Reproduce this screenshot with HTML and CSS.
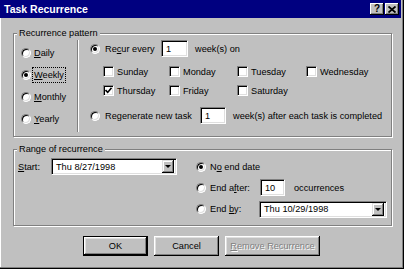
FILE: index.html
```html
<!DOCTYPE html>
<html lang="en">
  <head>
    <meta charset="UTF-8" />
    <meta name="viewport" content="width=device-width, initial-scale=1.0" />
    <title>Task Recurrence</title>
    <link rel="stylesheet" href="styles.css">
  </head>
  <body>
    <div id="dialog">
      <div id="titlebar">
        <span class="title">Task Recurrence</span>
        <span class="cap-btn help">?</span>
        <span class="cap-btn close">
          <svg width="8" height="7" viewBox="0 0 8 7"><path d="M0.5 0.5 L7.5 6.5 M7.5 0.5 L0.5 6.5" stroke="#000" stroke-width="1.8" /></svg>
        </span>
      </div>

      <fieldset class="group" id="pattern">
        <legend>Recurrence pattern</legend>
        <div class="pattern-body">
          <div class="freq">
            <div class="opt"><span class="radio"></span><span><u>D</u>aily</span></div>
            <div class="opt"><span class="radio on"></span><span class="focus"><u>W</u>eekly</span></div>
            <div class="opt"><span class="radio"></span><span><u>M</u>onthly</span></div>
            <div class="opt"><span class="radio"></span><span><u>Y</u>early</span></div>
          </div>
          <div class="sep"></div>
          <div class="weekly">
            <div class="line recur">
              <span class="radio on"></span>
              <span class="lbl lbl-recur">Re<u>c</u>ur every</span>
              <span class="edit num-1">1</span>
              <span class="tail">week(s) on</span>
            </div>
            <div class="days">
              <div class="check"><span class="box"></span>Sunday</div>
              <div class="check"><span class="box"></span>Monday</div>
              <div class="check"><span class="box"></span>Tuesday</div>
              <div class="check"><span class="box"></span>Wednesday</div>
              <div class="check"><span class="box">
                <svg width="7" height="7" viewBox="0 0 7 7"><path d="M0.5 3 L2.7 5.4 L6.5 0.8" fill="none" stroke="#000" stroke-width="1.6" /></svg>
              </span>Thursday</div>
              <div class="check"><span class="box"></span>Friday</div>
              <div class="check"><span class="box"></span>Saturday</div>
            </div>
            <div class="line regen">
              <span class="radio"></span>
              <span class="lbl lbl-regen">Re<u>g</u>enerate new task</span>
              <span class="edit num-2">1</span>
              <span class="tail">week(s) after each task is completed</span>
            </div>
          </div>
        </div>
      </fieldset>

      <fieldset class="group" id="range">
        <legend>Range of recurrence</legend>
        <div class="range-body">
          <div class="start">
            <span class="lbl lbl-start"><u>S</u>tart:</span>
            <span class="combo combo-start">
              <span class="val">Thu 8/27/1998</span>
              <span class="drop"><span class="arrow"></span></span>
            </span>
          </div>
          <div class="ends">
            <div class="end-row"><span class="radio on"></span><span>N<u>o</u> end date</span></div>
            <div class="end-row">
              <span class="radio"></span>
              <span class="lbl lbl-end">End a<u>f</u>ter:</span>
              <span class="edit num-3">10</span>
              <span class="tail occ">occurrences</span>
            </div>
            <div class="end-row">
              <span class="radio"></span>
              <span class="lbl lbl-endby">End <u>b</u>y:</span>
              <span class="combo combo-end">
                <span class="val">Thu 10/29/1998</span>
                <span class="drop"><span class="arrow"></span></span>
              </span>
            </div>
          </div>
        </div>
      </fieldset>

      <div class="buttons">
        <span class="btn default">OK</span>
        <span class="btn">Cancel</span>
        <span class="btn wide disabled"><span><u>R</u>emove Recurrence</span></span>
      </div>
    </div>
  </body>
</html>
```

FILE: styles.css
```css
* {
  box-sizing: border-box;
}
body {
  margin: 0;
  font-family: "Liberation Sans", Arial, sans-serif;
  font-size: 9.2px;
  color: #000;
  background: #c0c0c0;
}
u {
  text-decoration-thickness: 1px;
  text-underline-offset: 1px;
}
#dialog {
  width: 404px;
  height: 269px;
  background: #c0c0c0;
  border-right: 1px solid #000;
  border-bottom: 1px solid #000;
  box-shadow: inset -1px -1px 0 #808080, inset 1px 0 0 #fff;
  overflow: hidden;
}
#titlebar {
  display: flex;
  align-items: center;
  height: 18px;
  margin-right: 2px;
  padding: 0 2px 0 4px;
  background: #000080;
  color: #fff;
}
.title {
  flex: 1;
  font-size: 10.5px;
  font-weight: bold;
}
.cap-btn {
  display: flex;
  align-items: center;
  justify-content: center;
  width: 14px;
  height: 12px;
  background: #c0c0c0;
  color: #000;
  font-weight: bold;
  font-size: 10px;
  box-shadow: inset -1px -1px 0 #000, inset 1px 1px 0 #fff, inset -2px -2px 0 #808080;
}
.help {
  margin-right: 1px;
  padding-bottom: 1px;
}

/* group boxes */
.group {
  margin: 9px 0 0 13px;
  width: 379px;
  min-width: 0;
  padding: 1px 0 0 0;
  border: 1px solid #808080;
  box-shadow: 1px 1px 0 #fff, inset 1px 1px 0 #fff;
}
.group legend {
  margin-left: 3px;
  padding: 0 2px;
  line-height: 12px;
  background: #c0c0c0;
}
#range {
  margin-top: 6px;
}
.pattern-body {
  display: flex;
  height: 96px;
}
.freq {
  width: 63px;
  padding: 2px 0 0 7px;
}
.opt {
  display: flex;
  align-items: center;
  height: 22px;
}
.opt .radio {
  margin-right: 3px;
}
.focus {
  padding: 1px 1px;
  margin-left: -1px;
  outline: 1px dotted #000;
  line-height: 12px;
}
.sep {
  width: 2px;
  margin-bottom: 4px;
  border-left: 1px solid #808080;
  border-right: 1px solid #fff;
}
.weekly {
  padding-left: 11px;
}
.line {
  display: flex;
  align-items: center;
  height: 17px;
}
.line .radio {
  margin-right: 5px;
}
.regen {
  margin-top: 7px;
}
.lbl-recur {
  width: 56px;
}
.lbl-regen {
  width: 95px;
}
.tail {
  margin-left: 7px;
}
.days {
  display: grid;
  grid-template-columns: 66px 68px 69px auto;
  grid-auto-rows: 19px;
  margin-top: 5px;
  padding-left: 13px;
}
.check {
  display: flex;
  align-items: center;
}

/* controls */
.radio {
  position: relative;
  flex: none;
  width: 10px;
  height: 10px;
  border-radius: 50%;
  background: #fff;
  border: 1px solid;
  border-color: #808080 #fff #fff #808080;
  box-shadow: inset 1px 1px 0 #000, inset -1px -1px 0 #dfdfdf;
}
.radio.on::after {
  content: "";
  position: absolute;
  left: 2px;
  top: 2px;
  width: 4px;
  height: 4px;
  border-radius: 50%;
  background: #000;
}
.box {
  display: flex;
  align-items: center;
  justify-content: center;
  flex: none;
  width: 11px;
  height: 11px;
  margin-right: 3px;
  background: #fff;
  border: 1px solid;
  border-color: #808080 #fff #fff #808080;
  box-shadow: inset 1px 1px 0 #000, inset -1px -1px 0 #dfdfdf;
}
.edit,
.combo {
  display: flex;
  align-items: center;
  height: 17px;
  padding-left: 4px;
  background: #fff;
  border: 1px solid;
  border-color: #808080 #fff #fff #808080;
  box-shadow: inset 1px 1px 0 #000, inset -1px -1px 0 #dfdfdf;
}
.num-1 {
  width: 27px;
}
.num-2 {
  width: 26px;
}
.num-3 {
  width: 25px;
}
.combo {
  padding-right: 2px;
}
.combo .val {
  flex: 1;
}
.drop {
  display: flex;
  align-items: center;
  justify-content: center;
  width: 12px;
  height: 13px;
  background: #c0c0c0;
  box-shadow: inset -1px -1px 0 #000, inset 1px 1px 0 #dfdfdf, inset -2px -2px 0 #808080, inset 2px 2px 0 #fff;
}
.arrow {
  border-left: 3px solid transparent;
  border-right: 3px solid transparent;
  border-top: 3px solid #000;
}

/* range of recurrence */
.range-body {
  display: flex;
  height: 69px;
}
.start {
  display: flex;
  align-items: center;
  height: 21px;
  padding-left: 4px;
}
.lbl-start {
  width: 33px;
}
.combo-start {
  width: 126px;
}
.ends {
  margin-left: 19px;
}
.end-row {
  display: flex;
  align-items: center;
  height: 21px;
}
.end-row:last-child {
  height: 22px;
}
.end-row .radio {
  margin-right: 4px;
}
.lbl-end {
  width: 50px;
}
.lbl-endby {
  width: 49px;
}
.occ {
  margin-left: 9px;
}
.combo-end {
  width: 128px;
}

/* buttons */
.buttons {
  display: flex;
  gap: 6px;
  margin-top: 10px;
  padding-left: 83px;
}
.btn {
  display: flex;
  align-items: center;
  justify-content: center;
  width: 65px;
  height: 20px;
  background: #c0c0c0;
  box-shadow: inset -1px -1px 0 #000, inset 1px 1px 0 #fff, inset -2px -2px 0 #808080, inset 2px 2px 0 #dfdfdf;
}
.btn.default {
  border: 1px solid #000;
}
.btn.wide {
  width: 95px;
}
.btn.disabled {
  color: #808080;
  text-shadow: 1px 1px 0 #fff;
}
```
